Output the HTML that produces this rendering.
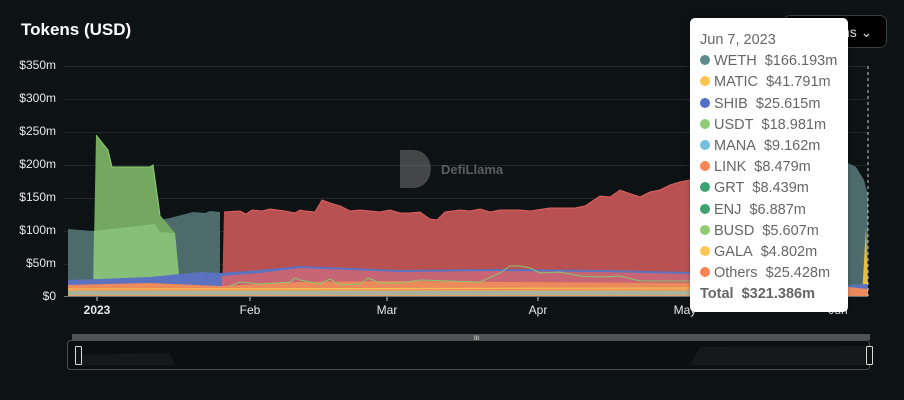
<!DOCTYPE html>
<html><head><meta charset="utf-8"><style>
*{margin:0;padding:0;box-sizing:border-box}
body{width:904px;height:400px;background:#0d1214;font-family:"Liberation Sans",sans-serif;position:relative;overflow:hidden;color:#fff}
.t{position:absolute;left:21px;top:20px;font-size:17px;font-weight:bold}
.yl{position:absolute;left:0;width:56px;text-align:right;font-size:12px;color:#e8e8e8}
.xl{position:absolute;top:303px;font-size:12px;color:#e8e8e8;transform:translateX(-50%)}
.btn{position:absolute;left:783px;top:15px;width:104px;height:33px;border:1px solid #3a3f42;border-radius:7px;background:#000;font-size:14px;color:#ddd;padding:8px 0 0 58px}
.tip{position:absolute;left:690px;top:18px;width:158px;height:294px;background:#fff;border-radius:5px;color:#666;font-size:14.5px;padding:12px 0 0 10px;line-height:21.2px;box-shadow:0 0 4px rgba(0,0,0,.3)}
.tip .d{display:inline-block;width:10px;height:10px;border-radius:50%;margin-right:4px;vertical-align:-0px}
</style></head><body>
<div class="t">Tokens (USD)</div>
<div class="yl" style="top:58px">$350m</div>
<div class="yl" style="top:91px">$300m</div>
<div class="yl" style="top:124px">$250m</div>
<div class="yl" style="top:157px">$200m</div>
<div class="yl" style="top:190px">$150m</div>
<div class="yl" style="top:223px">$100m</div>
<div class="yl" style="top:256px">$50m</div>
<div class="yl" style="top:289px">$0</div>
<svg width="904" height="400" style="position:absolute;left:0;top:0">
<g stroke="#23282b" stroke-width="1">
<line x1="64" y1="66.5" x2="868" y2="66.5"/><line x1="64" y1="99.5" x2="868" y2="99.5"/><line x1="64" y1="132.5" x2="868" y2="132.5"/><line x1="64" y1="165.5" x2="868" y2="165.5"/><line x1="64" y1="198.5" x2="868" y2="198.5"/><line x1="64" y1="231.5" x2="868" y2="231.5"/><line x1="64" y1="264.5" x2="868" y2="264.5"/></g>
<g opacity="0.45" fill="#888"><path d="M400 150h14a16 18 0 0 1 0 38h-14z"/></g>
<text x="441" y="174" font-family="Liberation Sans" font-weight="bold" font-size="13" fill="#5a5e60">DefiLlama</text>
<!-- teal -->
<path d="M68 229L80 230L93 231L120 226L150 222L170 218L193 212L205 213L210 211L220 212L220 296L68 296Z" fill="#4e6b6b"/>
<path d="M848 163L856 167L864 180L868 195L868 296L848 296Z" fill="#4e6b6b"/>
<path d="M862 296L866 227L868 296Z" fill="#e8c040"/>
<!-- green spike -->
<path d="M93 296L96 135L108 150L112 167L150 167L153 165L160 215L175 233L181 296Z" fill="#74a860"/>
<path d="M93 296L94 231L120 228L155 224L160 232L175 233L181 296Z" fill="#85bf78"/>
<path d="M96 135L108 150L112 167L150 167L153 165L160 215" fill="none" stroke="#90d070" stroke-width="1"/>
<!-- red -->
<path d="M222 296L224 212L240 211L246 214L252 210L262 211L270 209L285 211L295 213L300 210L305 211L315 212L322 200L330 203L340 206L350 211L360 210L380 212L390 210L400 213L410 213L420 212L430 219L437 220L445 212L460 210L470 211L480 209L490 212L500 210L520 210L530 211L550 208L575 208L585 206L600 196L610 197L620 190L628 193L640 197L650 192L660 190L670 185L680 182L690 180L690 296Z" fill="#b85252"/>
<path d="M224 212L240 211L246 214L252 210L262 211L270 209L285 211L295 213L300 210L305 211L315 212L322 200L330 203L340 206L350 211L360 210L380 212L390 210L400 213L410 213L420 212L430 219L437 220L445 212L460 210L470 211L480 209L490 212L500 210L520 210L530 211L550 208L575 208L585 206L600 196L610 197L620 190L628 193L640 197L650 192L660 190L670 185L680 182L690 180" fill="none" stroke="#e06060" stroke-width="1"/>
<!-- bottom bands -->
<path d="M68 280L100 279L150 277L200 272L220 273L260 270L300 266L350 268L400 270L500 269L600 270L690 272L690 296L68 296Z" fill="#5b72c0"/>
<path d="M848 285L868 284L868 296L848 296Z" fill="#5b72c0"/>
<path d="M222 296L222 276L260 273L300 268L350 270L400 272L500 271L600 272L690 274L690 296Z" fill="#c76575"/>
<path d="M68 285L150 283L220 286L300 282L400 281L500 282L690 283L690 296L68 296Z" fill="#eb8a5a"/>
<path d="M848 287L868 289L868 296L848 296Z" fill="#eb8a5a"/>
<path d="M68 290L300 289L500 290L690 289L690 296L68 296Z" fill="#e7a060"/>
<path d="M230 286L240 282L260 284L290 282L295 278L300 280L320 284L330 279L340 285L360 284L368 278L380 283L400 283L420 280L480 282L500 273L510 266L520 266L530 268L540 273L560 272L580 276L600 277L620 276L640 281L690 281" fill="none" stroke="#8ac870" stroke-width="1"/>
<path d="M68 292L690 292M68 294L690 294" stroke="#6ac3d8" stroke-width="1"/>
<path d="M68 289L690 288" stroke="#f7c850" stroke-width="1"/>
<line x1="868" y1="66" x2="868" y2="296" stroke="#ccc" stroke-dasharray="3,3"/>
<line x1="64" y1="296.5" x2="868" y2="296.5" stroke="#6e7377"/>
<g stroke="#ccc"><line x1="97" y1="297" x2="97" y2="301"/><line x1="250" y1="297" x2="250" y2="301"/><line x1="387" y1="297" x2="387" y2="301"/><line x1="538" y1="297" x2="538" y2="301"/></g>
<!-- slider -->
<rect x="72" y="334" width="798" height="6" fill="#4f5355"/>
<text x="474" y="340" font-size="6" fill="#eee">III</text>
<rect x="67.5" y="340.5" width="802" height="29" rx="3" fill="#0b0f10" stroke="#4a4e50"/>
<path d="M80 355L170 353L175 365L80 365Z M700 347L865 346L865 365L690 365Z" fill="#15191a"/>
<rect x="75.5" y="346.5" width="6" height="18" rx="1" fill="#0d1214" stroke="#ddd"/>
<rect x="866.5" y="346.5" width="6" height="18" rx="1" fill="#0d1214" stroke="#ddd"/>
</svg>
<div class="xl" style="left:97px;font-weight:bold">2023</div>
<div class="xl" style="left:250px">Feb</div>
<div class="xl" style="left:387px">Mar</div>
<div class="xl" style="left:538px">Apr</div>
<div class="xl" style="left:685px">May</div>
<div class="xl" style="left:838px">Jun</div>
<div class="btn">ns &#8964;</div>
<div class="tip">
<div>Jun 7, 2023</div>
<div><span class="d" style="background:#5f8a8a"></span>WETH&nbsp; $166.193m</div>
<div><span class="d" style="background:#f9c54f"></span>MATIC&nbsp; $41.791m</div>
<div><span class="d" style="background:#5470c6"></span>SHIB&nbsp; $25.615m</div>
<div><span class="d" style="background:#91cc75"></span>USDT&nbsp; $18.981m</div>
<div><span class="d" style="background:#73c0de"></span>MANA&nbsp; $9.162m</div>
<div><span class="d" style="background:#fc8452"></span>LINK&nbsp; $8.479m</div>
<div><span class="d" style="background:#3ba272"></span>GRT&nbsp; $8.439m</div>
<div><span class="d" style="background:#3ba272"></span>ENJ&nbsp; $6.887m</div>
<div><span class="d" style="background:#91cc75"></span>BUSD&nbsp; $5.607m</div>
<div><span class="d" style="background:#fac858"></span>GALA&nbsp; $4.802m</div>
<div><span class="d" style="background:#fc8452"></span>Others&nbsp; $25.428m</div>
<div style="font-weight:bold">Total&nbsp; $321.386m</div>
</div>
</body></html>
